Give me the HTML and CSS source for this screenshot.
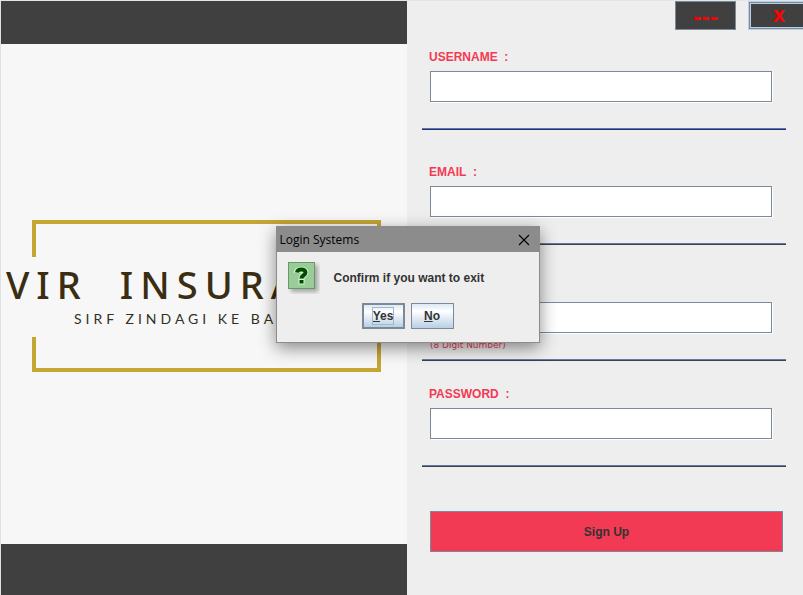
FILE: index.html
```html
<!DOCTYPE html>
<html lang="en">
<head>
<meta charset="utf-8">
<title>Login Systems</title>
<link rel="stylesheet" href="styles.css">
</head>
<body>
<div class="window">
  <section class="brand">
    <div class="brand-body">
      <div class="bracket bracket-top"></div>
      <div class="brand-text">
        <div class="brand-name"><span>VIR</span> <span>INSURA</span></div>
        <div class="brand-motto">SIRF ZINDAGI KE BA</div>
      </div>
      <div class="bracket bracket-bottom"></div>
    </div>
  </section>

  <main class="panel">
    <div class="window-buttons">
      <button class="window-button minimize" type="button">---</button>
      <button class="window-button close" type="button">X</button>
    </div>
    <form class="form">
      <div class="field">
        <label class="label" for="username">USERNAME&nbsp; :</label>
        <input class="input" id="username" type="text">
        <hr class="rule rule-active">
      </div>
      <div class="field">
        <label class="label" for="email">EMAIL&nbsp; :</label>
        <input class="input" id="email" type="text">
        <hr class="rule">
      </div>
      <div class="field">
        <input class="input" id="number" type="text">
        <label class="hint" for="number">(8 Digit Number)</label>
        <hr class="rule">
      </div>
      <div class="field">
        <label class="label" for="password">PASSWORD&nbsp; :</label>
        <input class="input" id="password" type="password">
        <hr class="rule">
      </div>
      <button class="submit" type="button">Sign Up</button>
    </form>
  </main>

  <div class="dialog" role="dialog" aria-labelledby="dialog-title">
    <div class="dialog-bar">
      <span id="dialog-title">Login Systems</span>
      <button class="dialog-close" type="button" aria-label="Close">
        <svg width="12" height="12" viewBox="0 0 12 12"><path d="M1 1 11 11M11 1 1 11" stroke="#000" stroke-width="1.1" fill="none"/></svg>
      </button>
    </div>
    <div class="dialog-message">
      <svg class="question" width="32" height="32" viewBox="0 0 32 32">
        <rect class="question-shadow" x="3" y="3" width="27" height="27"/>
        <rect x=".5" y=".5" width="26" height="26" fill="#99cc99" stroke="#669966"/>
        <g fill="none" stroke="#d4f5d0" stroke-width="6">
          <path d="M8.500 11C9 7 17.500 6.500 17.500 10.500C17.500 13.500 13.500 13 13.500 16.500"/>
          <path d="M13.500 17V22.500"/>
        </g>
        <path d="M9 10.500C9.500 6.500 17.500 6.500 17.500 10.500C17.500 13.500 13.500 13 13.500 16.500" fill="none" stroke="#004d00" stroke-width="4"/>
        <rect x="11.500" y="18" width="4" height="3.500" fill="#004d00"/>
      </svg>
      <span>Confirm if you want to exit</span>
    </div>
    <div class="dialog-actions">
      <button class="action action-default" type="button"><span class="focus"><u>Y</u>es</span></button>
      <button class="action" type="button"><u>N</u>o</button>
    </div>
  </div>
</div>
</body>
</html>
```
FILE: styles.css
```css
* { box-sizing: border-box; }

body {
  margin: 0;
  background: #eeeeee;
  color: #333333;
  font: bold 12px/16px "Liberation Sans", Arial, sans-serif;
}

button { font: inherit; color: inherit; padding: 0; }

.window {
  position: relative;
  display: grid;
  grid-template-columns: 407fr 396fr;
  min-height: 100vh;
  overflow: hidden;
  border-top: 1px solid #e2e7e5;
}

.brand {
  display: flex;
  flex-direction: column;
  min-width: 0;
  border-left: 1px solid #e0e0e0;
  background: #f7f7f7;
}

.brand::before,
.brand::after {
  content: "";
  height: 43px;
  background: #404040;
}

.brand::after { height: 51px; }

.brand-body { flex: 1; padding: 176px 26px 0 31px; }

.bracket { border: 4px solid #c4a635; }
.bracket-top { height: 37px; border-bottom: 0; }
.bracket-bottom { height: 35px; border-top: 0; }

.brand-text {
  height: 80px;
  padding-top: 7px;
  white-space: nowrap;
}

.brand-name {
  display: flex;
  gap: 32px;
  margin-left: -26px;
  color: #3a2d12;
  font: 600 38px/40px "Noto Sans", sans-serif;
  font-weight: 500;
  letter-spacing: 7px;
}

.brand-motto {
  margin-left: 42px;
  padding-top: 5px;
  color: #33301f;
  font: 400 14px/20px Lato, sans-serif;
  letter-spacing: 4px;
}

.panel { min-width: 0; }

.window-buttons {
  display: flex;
  justify-content: flex-end;
  gap: 12px;
  margin-right: -7px;
}

.window-button {
  width: 61px;
  height: 29px;
  padding-top: 2px;
  border: 1px solid #7a8a99;
  background: #404040;
  color: #ff0000;
  font: bold 16px/24px "DejaVu Sans", sans-serif;
}

.minimize { font-size: 20px; }

.close {
  width: 62px;
  border-color: #b8cfe5;
  box-shadow: inset 0 0 0 1px #7a8a99, inset 0 0 0 2px #b8cfe5;
}

.form {
  display: grid;
  grid-template-rows: 100px 115px 116px 106px auto;
  padding: 0 17px 0 15px;
}

.field {
  display: grid;
  grid-template-rows: 22px 31px 26px 2px;
  align-content: end;
}

.label {
  grid-row: 1;
  margin-left: 7px;
  color: #f23a54;
}

.input {
  grid-row: 2;
  min-width: 0;
  margin: 0 14px 0 8px;
  padding: 0 4px;
  border: 1px solid #7a8a99;
  border-radius: 0;
  background: #ffffff;
  box-shadow: 1px 1px 0 #ffffff;
  font: inherit;
  outline: 0;
}

.hint {
  grid-row: 3;
  margin-left: 8px;
  color: #f23a54;
  font: 9px/24px "DejaVu Sans", sans-serif;
}

.rule {
  grid-row: 4;
  width: 100%;
  height: 2px;
  margin: 0;
  border: 0;
  border-top: 1px solid #6379ad;
  background: #404040;
}

.rule-active { border-top-color: #4f78cc; background: #303050; }

.submit {
  height: 41px;
  margin: 44px 3px 0 8px;
  border: 1px solid #7a8a99;
  background: #f23a54;
}

.dialog {
  position: absolute;
  top: 225px;
  left: calc(50% - 126px);
  width: 264px;
  border: 1px solid #8c8c8c;
  background: #eeeeee;
  box-shadow: 0 5px 16px rgba(0, 0, 0, .45);
}

.dialog-bar {
  display: flex;
  align-items: center;
  justify-content: space-between;
  height: 25px;
  padding: 0 9px 0 3px;
  background: #8c8c8c;
  color: #000000;
  font: 12px/16px "Open Sans", sans-serif;
}

.dialog-close {
  display: flex;
  border: 0;
  background: none;
}

.dialog-message {
  display: flex;
  align-items: center;
  gap: 14px;
  padding: 10px 11px 0;
}

.question-shadow { fill: #000000; opacity: .3; filter: blur(2px); }

.dialog-actions {
  display: flex;
  justify-content: center;
  gap: 6px;
  padding: 9px 0 13px;
}

.action {
  width: 43px;
  height: 26px;
  border: 1px solid #7a8a99;
  background: linear-gradient(#dde8f3, #ffffff 30%, #b8cfe5);
}

.action-default { border-width: 2px; }

.focus {
  display: inline-block;
  outline: 1px solid #a3b8cc;
}
```
